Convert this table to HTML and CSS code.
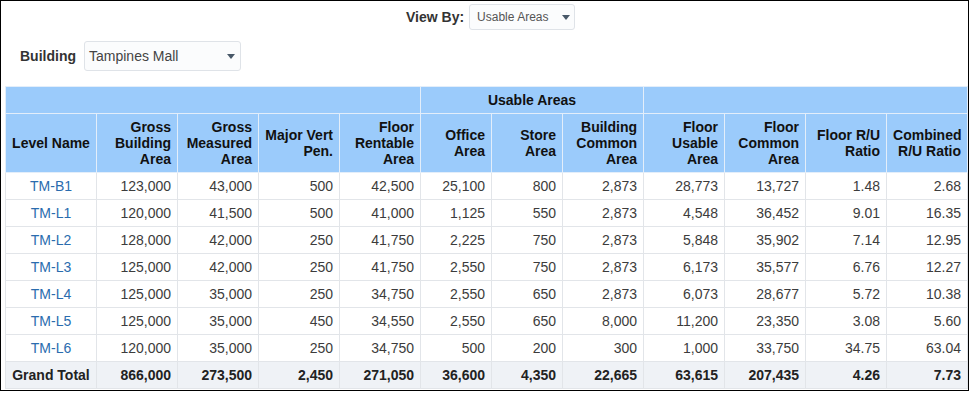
FILE: index.html
```html
<!DOCTYPE html>
<html>
<head>
<meta charset="utf-8">
<link rel="stylesheet" href="styles.css">
</head>
<body>
<div class="frame">
  <div class="viewby">
    <span class="label">View By:</span>
    <div class="select select-sm"><span>Usable Areas</span><i class="caret"></i></div>
  </div>
  <div class="building">
    <span class="label">Building</span>
    <div class="select select-lg"><span>Tampines Mall</span><i class="caret"></i></div>
  </div>
  <table class="grid">
    <colgroup>
      <col class="c1"><col class="c"><col class="c"><col class="c"><col class="c">
      <col class="cs"><col class="cs"><col class="c"><col class="c"><col class="c"><col class="c"><col class="c">
    </colgroup>
    <thead>
      <tr class="h1">
        <th colspan="5"></th>
        <th colspan="3" class="center">Usable Areas</th>
        <th colspan="4"></th>
      </tr>
      <tr class="h2">
        <th class="center">Level Name</th>
        <th>Gross<br>Building<br>Area</th>
        <th>Gross<br>Measured<br>Area</th>
        <th>Major Vert<br>Pen.</th>
        <th>Floor<br>Rentable<br>Area</th>
        <th>Office<br>Area</th>
        <th>Store<br>Area</th>
        <th>Building<br>Common<br>Area</th>
        <th>Floor<br>Usable<br>Area</th>
        <th>Floor<br>Common<br>Area</th>
        <th>Floor R/U<br>Ratio</th>
        <th>Combined<br>R/U Ratio</th>
      </tr>
    </thead>
    <tbody>
      <tr><td class="name"><a>TM-B1</a></td><td>123,000</td><td>43,000</td><td>500</td><td>42,500</td><td>25,100</td><td>800</td><td>2,873</td><td>28,773</td><td>13,727</td><td>1.48</td><td>2.68</td></tr>
      <tr><td class="name"><a>TM-L1</a></td><td>120,000</td><td>41,500</td><td>500</td><td>41,000</td><td>1,125</td><td>550</td><td>2,873</td><td>4,548</td><td>36,452</td><td>9.01</td><td>16.35</td></tr>
      <tr><td class="name"><a>TM-L2</a></td><td>128,000</td><td>42,000</td><td>250</td><td>41,750</td><td>2,225</td><td>750</td><td>2,873</td><td>5,848</td><td>35,902</td><td>7.14</td><td>12.95</td></tr>
      <tr><td class="name"><a>TM-L3</a></td><td>125,000</td><td>42,000</td><td>250</td><td>41,750</td><td>2,550</td><td>750</td><td>2,873</td><td>6,173</td><td>35,577</td><td>6.76</td><td>12.27</td></tr>
      <tr><td class="name"><a>TM-L4</a></td><td>125,000</td><td>35,000</td><td>250</td><td>34,750</td><td>2,550</td><td>650</td><td>2,873</td><td>6,073</td><td>28,677</td><td>5.72</td><td>10.38</td></tr>
      <tr><td class="name"><a>TM-L5</a></td><td>125,000</td><td>35,000</td><td>450</td><td>34,550</td><td>2,550</td><td>650</td><td>8,000</td><td>11,200</td><td>23,350</td><td>3.08</td><td>5.60</td></tr>
      <tr><td class="name"><a>TM-L6</a></td><td>120,000</td><td>35,000</td><td>250</td><td>34,750</td><td>500</td><td>200</td><td>300</td><td>1,000</td><td>33,750</td><td>34.75</td><td>63.04</td></tr>
      <tr class="total"><td class="name">Grand Total</td><td>866,000</td><td>273,500</td><td>2,450</td><td>271,050</td><td>36,600</td><td>4,350</td><td>22,665</td><td>63,615</td><td>207,435</td><td>4.26</td><td>7.73</td></tr>
    </tbody>
  </table>
</div>
</body>
</html>
```

FILE: styles.css
```css
html, body {
  margin: 0;
  padding: 0;
  background: #fff;
}
body {
  font-family: "Liberation Sans", Arial, sans-serif;
  font-size: 14px;
  color: #333;
}
.frame {
  box-sizing: border-box;
  width: 969px;
  height: 391px;
  border: 1px solid #000;
  display: flex;
  flex-direction: column;
}
.label {
  font-weight: bold;
  color: #333;
  font-size: 14px;
}
.viewby {
  display: flex;
  align-items: center;
  padding-left: 405px;
  margin-top: 3px;
  gap: 5px;
  height: 26px;
}
.building {
  display: flex;
  align-items: center;
  padding-left: 19px;
  margin-top: 11px;
  gap: 8px;
  height: 30px;
}
.select {
  box-sizing: border-box;
  display: flex;
  align-items: center;
  justify-content: space-between;
  border: 1px solid #dfe3e8;
  border-radius: 3px;
  background: #fbfcfd;
  color: #444;
}
.select-sm {
  width: 106px;
  height: 26px;
  font-size: 12px;
  padding: 0 4px 0 7px;
  color: #555;
}
.select-lg {
  width: 157px;
  height: 30px;
  font-size: 14px;
  padding: 0 5px 0 4px;
}
.caret {
  width: 0;
  height: 0;
  border-left: 4.5px solid transparent;
  border-right: 4.5px solid transparent;
  border-top: 5px solid #485868;
  margin-right: 0;
}
.grid {
  margin: 15px 0 0 4px;
  border-collapse: collapse;
  table-layout: fixed;
  width: 962px;
}
.c1 { width: 91px; }
.c { width: 81px; }
.cs { width: 71px; }
.grid th {
  background: #9bcbfb;
  border: 1px solid #e3eefa;
  color: #111;
  font-weight: bold;
  text-align: right;
  padding: 0 6px;
  line-height: 16px;
  vertical-align: middle;
}
.grid tr.h1 th {
  height: 26px;
}
.grid tr.h2 th {
  height: 58px;
}
.grid th.center {
  text-align: center;
}
.grid td {
  border: 1px solid #e2e5e9;
  height: 26px;
  padding: 0 6px;
  text-align: right;
  color: #3c3c3c;
  white-space: nowrap;
}
.grid td.name {
  text-align: center;
}
.grid td.name a {
  color: #2a6cae;
}
.grid tr.total td {
  background: #eff2f6;
  font-weight: bold;
  color: #222;
  border-top: 1px solid #d5dbe2;
}
```
